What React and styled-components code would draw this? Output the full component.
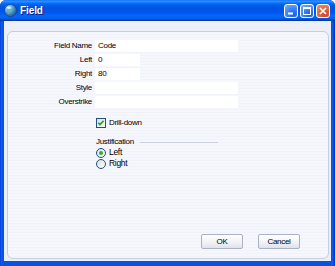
import React from 'react';
import styled, { createGlobalStyle } from 'styled-components';

const GlobalStyle = createGlobalStyle`
  html, body {
    margin: 0;
    padding: 0;
    background: #ffffff;
  }
  body {
    font-family: "Liberation Sans", Arial, sans-serif;
  }
`;

const Window = styled.div`
  width: 335px;
  height: 266px;
  display: flex;
  flex-direction: column;
  background: linear-gradient(to right, #0831d9 0px, #0a5fe8 1px, #0553e6 3px, #0553e6 331px, #0a5fe8 333px, #0831d9 334px);
  border-radius: 6px 6px 0 0;
  overflow: hidden;
  box-sizing: border-box;
`;

const TitleBar = styled.div`
  height: 21px;
  flex: none;
  display: flex;
  align-items: center;
  padding: 0 5px 0 4px;
  background: linear-gradient(
    #0058ee 0%, #3593ff 4%, #288eff 8%, #127dff 12%, #036ffc 16%,
    #0262ee 22%, #0057e5 30%, #0054e3 40%, #0055eb 56%, #005bf5 66%,
    #026afe 76%, #0062ef 86%, #0052d6 92%, #0040ab 96%, #003092 100%
  );
`;

const Title = styled.span`
  margin-left: 3px;
  flex: 1;
  color: #ffffff;
  font-weight: bold;
  font-size: 10px;
  letter-spacing: -0.1px;
  text-shadow: 1px 1px 0 #0a1883;
`;

const Controls = styled.div`
  display: flex;
  gap: 2px;
`;

const ControlButton = styled.div`
  width: 14px;
  height: 14px;
  box-sizing: border-box;
  border: 1px solid #ffffff;
  border-radius: 3px;
  display: flex;
  align-items: center;
  justify-content: center;
  background: ${p => p.$close
    ? 'radial-gradient(circle at 70% 80%, #cc4628 0%, #e0633e 45%, #f0936f 100%)'
    : 'radial-gradient(circle at 70% 80%, #1a5fe6 0%, #3a80f3 45%, #7fb0ff 100%)'};
`;

const Client = styled.div`
  flex: 1;
  margin: 0 4px 5px 4px;
  padding: 10px 2px 2px 3px;
  background: #eceff7;
  display: flex;
`;

const Panel = styled.div`
  flex: 1;
  border: 1px solid #c5cddb;
  border-radius: 6px;
  background: repeating-linear-gradient(#f5f7fc 0px, #f5f7fc 2px, #f0f3fa 2px, #f0f3fa 3px);
  display: flex;
  flex-direction: column;
  padding: 8px 0 9px 0;
  font-size: 8px;
  color: #000000;
  letter-spacing: -0.3px;
`;

const FormGrid = styled.div`
  display: grid;
  grid-template-columns: 84px auto;
  column-gap: 3px;
  row-gap: 2px;
  grid-auto-rows: 12px;
  align-items: center;
`;

const Label = styled.label`
  text-align: right;
  line-height: 12px;
`;

const Input = styled.div`
  width: ${p => p.$w}px;
  height: 12px;
  line-height: 12px;
  background: #ffffff;
  padding-left: 3px;
  box-sizing: border-box;
`;

const Options = styled.div`
  margin: 10px 0 0 88px;
  display: flex;
  flex-direction: column;
`;

const CheckRow = styled.div`
  display: flex;
  align-items: center;
  gap: 3px;
  height: 10px;
  line-height: 10px;
`;

const GroupHead = styled.div`
  margin-top: 8px;
  display: flex;
  align-items: center;
  width: 122px;
  height: 11px;
  line-height: 11px;
  gap: 6px;
  &::after {
    content: '';
    flex: 1;
    height: 1px;
    margin-top: 2px;
    background: #c9cfdc;
  }
`;

const RadioRow = styled.div`
  display: flex;
  align-items: center;
  gap: 3px;
  height: 11px;
  line-height: 11px;
  font-size: 8.5px;
`;

const Footer = styled.div`
  margin-top: auto;
  display: flex;
  justify-content: flex-end;
  gap: 15px;
  padding-right: 28px;
`;

const Button = styled.div`
  width: 42px;
  height: 15px;
  box-sizing: border-box;
  border: 1px solid #a9b1c2;
  border-radius: 2px;
  background: linear-gradient(#ffffff, #f0f1f4 60%, #dfe2e9);
  display: flex;
  align-items: center;
  justify-content: center;
  font-size: 8px;
`;

const Globe = () => (
  <svg width="13" height="13" viewBox="0 0 13 13">
    <defs>
      <radialGradient id="g" cx="0.35" cy="0.3" r="0.8">
        <stop offset="0" stopColor="#d9f1ff" />
        <stop offset="0.45" stopColor="#4f9fd6" />
        <stop offset="1" stopColor="#1d4f86" />
      </radialGradient>
    </defs>
    <circle cx="6.5" cy="6.5" r="6" fill="url(#g)" stroke="#1b3e73" strokeWidth="0.6" />
    <path d="M3 4.5 C4.5 3.5 5.5 5 7 4.5 C8 5.5 6.5 7 8 8 C7 9.5 5 9 4.5 10.5 C3.5 9 2.5 7 3 4.5Z" fill="#5fb0b4" opacity="0.8" />
    <ellipse cx="4.8" cy="3.8" rx="2" ry="1.2" fill="#ffffff" opacity="0.6" />
  </svg>
);

const CheckBox = ({ checked }) => (
  <svg width="10" height="10" viewBox="0 0 10 10">
    <defs>
      <linearGradient id="cb" x1="0" y1="0" x2="1" y2="1">
        <stop offset="0" stopColor="#dcdcd7" />
        <stop offset="1" stopColor="#ffffff" />
      </linearGradient>
    </defs>
    <rect x="0.5" y="0.5" width="9" height="9" fill="url(#cb)" stroke="#1c5180" />
    {checked && <path d="M2.3 4.8 L4 6.6 L7.6 2.9" fill="none" stroke="#21a121" strokeWidth="1.6" />}
  </svg>
);

const Radio = ({ checked }) => (
  <svg width="10" height="10" viewBox="0 0 10 10">
    <defs>
      <linearGradient id="rb" x1="0" y1="0" x2="1" y2="1">
        <stop offset="0" stopColor="#dcdcd7" />
        <stop offset="1" stopColor="#ffffff" />
      </linearGradient>
    </defs>
    <circle cx="5" cy="5" r="4.5" fill="url(#rb)" stroke="#1c5180" />
    {checked && <circle cx="5" cy="5" r="2" fill="#2fb12f" />}
  </svg>
);

const fields = [
  { label: 'Field Name', value: 'Code', w: 143 },
  { label: 'Left', value: '0', w: 45 },
  { label: 'Right', value: '80', w: 45 },
  { label: 'Style', value: '', w: 143 },
  { label: 'Overstrike', value: '', w: 143 },
];

export default function App() {
  return (
    <>
      <GlobalStyle />
      <Window>
        <TitleBar>
          <Globe />
          <Title>Field</Title>
          <Controls>
            <ControlButton>
              <svg width="12" height="12" viewBox="0 0 12 12">
                <rect x="3" y="7.5" width="5" height="2" fill="#fff" />
              </svg>
            </ControlButton>
            <ControlButton>
              <svg width="12" height="12" viewBox="0 0 12 12">
                <rect x="2.5" y="2.5" width="7" height="7" fill="none" stroke="#fff" strokeWidth="1" />
                <rect x="2.5" y="2.5" width="7" height="1.6" fill="#fff" />
              </svg>
            </ControlButton>
            <ControlButton $close>
              <svg width="12" height="12" viewBox="0 0 12 12">
                <path d="M3 3 L9 9 M9 3 L3 9" stroke="#fff" strokeWidth="1.7" />
              </svg>
            </ControlButton>
          </Controls>
        </TitleBar>
        <Client>
          <Panel>
            <FormGrid>
              {fields.map(f => (
                <React.Fragment key={f.label}>
                  <Label>{f.label}</Label>
                  <Input $w={f.w}>{f.value}</Input>
                </React.Fragment>
              ))}
            </FormGrid>
            <Options>
              <CheckRow>
                <CheckBox checked />
                <span>Drill-down</span>
              </CheckRow>
              <GroupHead>Justification</GroupHead>
              <RadioRow>
                <Radio checked />
                <span>Left</span>
              </RadioRow>
              <RadioRow>
                <Radio />
                <span>Right</span>
              </RadioRow>
            </Options>
            <Footer>
              <Button>OK</Button>
              <Button>Cancel</Button>
            </Footer>
          </Panel>
        </Client>
      </Window>
    </>
  );
}
